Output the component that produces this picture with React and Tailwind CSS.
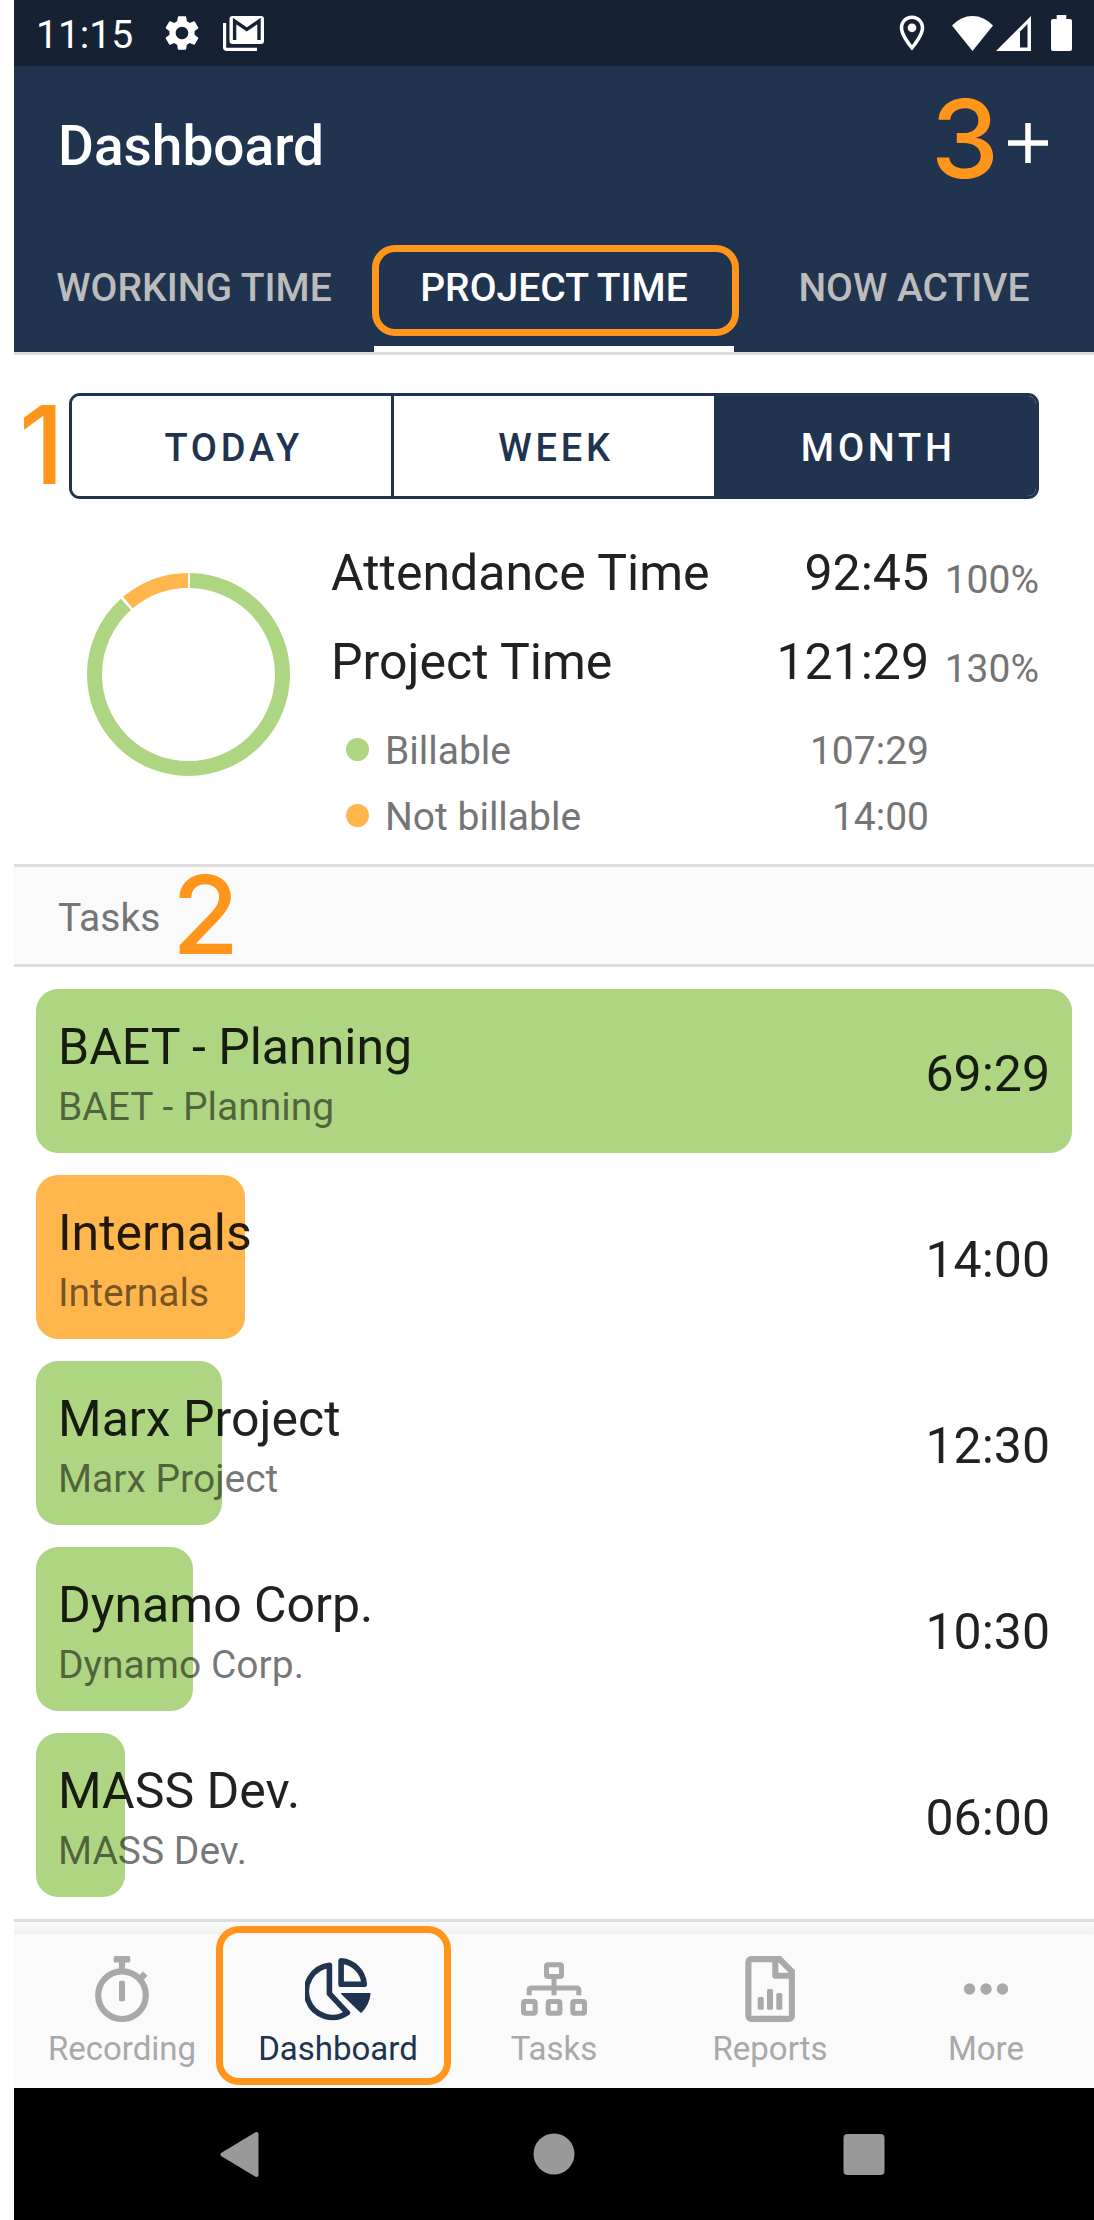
import { useState } from "react";
import { MdSettings, MdOutlineLocationOn } from "react-icons/md";

const TASKS = [
    { name: "BAET - Planning", time: "69:29", minutes: 4169, billable: true },
    { name: "Internals", time: "14:00", minutes: 840, billable: false },
    { name: "Marx Project", time: "12:30", minutes: 750, billable: true },
    { name: "Dynamo Corp.", time: "10:30", minutes: 630, billable: true },
    { name: "MASS Dev.", time: "06:00", minutes: 360, billable: true },
];

const NAV = [
    { label: "Recording", Icon: StopwatchIcon },
    { label: "Dashboard", Icon: PieIcon },
    { label: "Tasks", Icon: SitemapIcon },
    { label: "Reports", Icon: ReportIcon },
    { label: "More", Icon: MoreIcon },
];

function StopwatchIcon() {
    return (
        <svg width="66" height="66" viewBox="0 0 66 66" fill="none" stroke="currentColor" strokeWidth="6.2">
            <circle cx="33" cy="39.2" r="23.8" />
            <path d="M33 5v9M50.5 23.5l5.7-5.9" />
            <rect x="24.7" y="0" width="16.6" height="6.4" rx="1.5" fill="currentColor" stroke="none" />
            <rect x="30" y="24.7" width="6" height="20.6" rx="1.5" fill="currentColor" stroke="none" />
        </svg>
    );
}

function PieIcon() {
    return (
        <svg width="66" height="66" viewBox="0 0 66 66" fill="none" stroke="currentColor" strokeWidth="5.6" strokeLinejoin="round">
            <path d="M36.1 4.9V28.2H59.2A25 25 0 0 0 36.1 4.9Z" />
            <path d="M24.4 9.2V37.6L42.4 56.8A26.2 26.2 0 1 1 24.4 9.2Z" />
            <path d="M36.5 37.6H65A30 30 0 0 1 56 56.2Z" fill="currentColor" strokeWidth="1.2" />
        </svg>
    );
}

function SitemapIcon() {
    return (
        <svg width="66" height="66" viewBox="0 0 66 66" fill="none" stroke="currentColor" strokeWidth="5">
            <rect x="25.5" y="8.8" width="15" height="11.7" rx="1.5" />
            <path d="M33 21v18.3M8.2 39.3V34q0-2 2-2h45.6q2 0 2 2v5.3" />
            <rect x="2.5" y="45.5" width="11.7" height="11.7" rx="1.5" />
            <rect x="27.2" y="45.5" width="11.7" height="11.7" rx="1.5" />
            <rect x="51.8" y="45.5" width="11.7" height="11.7" rx="1.5" />
        </svg>
    );
}

function ReportIcon() {
    return (
        <svg width="66" height="66" viewBox="0 0 66 66" fill="none" stroke="currentColor" strokeWidth="6.1">
            <path d="M14.4 3.1H42.5L54.9 15.5V59.9a3 3 0 0 1-3 3H14.4a3 3 0 0 1-3-3V6.1a3 3 0 0 1 3-3Z" />
            <path d="M38.3 3V19.7H55" strokeLinejoin="round" />
            <g fill="currentColor" stroke="none">
                <rect x="20.7" y="41" width="6" height="12.7" rx="1.5" />
                <rect x="30" y="33" width="6" height="20.7" rx="1.5" />
                <rect x="39.3" y="37" width="6" height="16.7" rx="1.5" />
            </g>
        </svg>
    );
}

function MoreIcon() {
    return (
        <svg width="66" height="66" viewBox="0 0 66 66" fill="currentColor">
            <circle cx="16.5" cy="33" r="5.7" />
            <circle cx="33" cy="33" r="5.7" />
            <circle cx="49.5" cy="33" r="5.7" />
        </svg>
    );
}

function StatusBar() {
    return (
        <div className="flex h-[66px] items-center bg-[#162234] px-[22px] text-white">
            <span className="pt-[3px] text-[39px] leading-[46px]">11:15</span>
            <MdSettings className="ml-[28px] size-[42px]" />
            <svg className="ml-5" width="41" height="35" viewBox="0 0 41 35" fill="none">
                <path d="M1.6 7V31.4a2 2 0 0 0 2 2H34" stroke="white" strokeWidth="3.2" />
                <rect x="6.5" y="0" width="34.5" height="28" rx="3" fill="white" />
                <path d="M11.6 24V5L23.8 13.5L36 5V24" stroke="#162234" strokeWidth="3.4" />
            </svg>

            <MdOutlineLocationOn className="ml-auto size-[42px]" />
            <svg className="ml-[19px]" width="41" height="35" viewBox="0 0 41 35" fill="white">
                <path d="M0 9.5Q9 0 20.5 0T41 9.5L20.5 35Z" />
            </svg>
            <svg className="ml-[3px]" width="35" height="35" viewBox="0 0 35 35" fill="white">
                <path fillRule="evenodd" d="M0 35L35 0V35ZM24 15.5V31.5H31.5V8Z" />
            </svg>
            <svg className="ml-5" width="21" height="36" viewBox="0 0 21 36" fill="white">
                <rect x="0" y="4" width="21" height="32" rx="2" />
                <rect x="5.7" y="0" width="9.6" height="6" />
            </svg>
        </div>
    );
}

function Header({ tab, setTab }) {
    return (
        <header className="border-b-[3px] border-[#dddddd] bg-[#20334f]">
            <div className="relative flex h-[154px] items-center justify-between px-[44px]">
                <h1 className="pt-[6px] text-[55px] leading-[64px] font-medium text-white">Dashboard</h1>
                <button aria-label="Add" className="text-white">
                    <svg width="44" height="44" viewBox="0 0 44 44" stroke="currentColor" strokeWidth="5.5">
                        <path d="M22 2v40M2 22h40" />
                    </svg>
                </button>
                <span className="absolute top-[18px] right-[95px] font-['Inter',sans-serif] text-[109px] leading-none font-medium text-[#ff951a]">3</span>
            </div>

            <div className="grid h-[132px] grid-cols-3">
                {["WORKING TIME", "PROJECT TIME", "NOW ACTIVE"].map((name) => (
                    <button
                        key={name}
                        onClick={() => setTab(name)}
                        className={`relative pt-[3px] text-[39px] leading-[46px] font-medium ${tab === name ? "text-white" : "text-[#bcbcbc]"}`}
                    >
                        {name}
                        {tab === name && <span className="absolute inset-x-0 bottom-0 h-[6px] bg-white" />}
                        {name === "PROJECT TIME" && (
                            <span className="absolute top-[25px] -right-[5px] bottom-[16px] -left-[2px] rounded-[23px] border-[7px] border-[#ff951a]" />
                        )}
                    </button>
                ))}
            </div>
        </header>
    );
}

function RangeSwitch() {
    const [range, setRange] = useState("MONTH");
    return (
        <div className="relative">
            <span className="absolute -top-[3px] -left-[50px] font-['Inter',sans-serif] text-[109px] leading-none font-medium text-[#ff951a]">1</span>
            <div className="flex h-[106px] overflow-hidden rounded-[11px] border-[3px] border-[#20334f]">
                {["TODAY", "WEEK", "MONTH"].map((name) => (
                    <button
                        key={name}
                        onClick={() => setRange(name)}
                        className={`flex-1 border-r-[3px] border-[#20334f] pt-1 pl-1 text-[38px] leading-[46px] font-medium tracking-widest last:border-r-0 ${range === name ? "bg-[#20334f] text-white" : "bg-white text-[#20334f]"}`}
                    >
                        {name}
                    </button>
                ))}
            </div>
        </div>
    );
}

// Ring chart, billable share first, drawn clockwise from the top
function Donut() {
    const r = 94;
    const c = 2 * Math.PI * r;
    const billable = c * (6449 / 7289);
    return (
        <svg width="203" height="203" viewBox="0 0 203 203" fill="none" strokeWidth="15">
            <g transform="rotate(-90 101.5 101.5)">
                <circle cx="101.5" cy="101.5" r={r} stroke="#aed581" strokeDasharray={`${billable - 2.8} ${c}`} strokeDashoffset="-1.4" />
                <circle cx="101.5" cy="101.5" r={r} stroke="#ffb74d" strokeDasharray={`${c - billable - 2.8} ${c}`} strokeDashoffset={-billable - 1.4} />
            </g>
        </svg>
    );
}

function Summary() {
    const totals = [
        ["Attendance Time", "92:45", "100%"],
        ["Project Time", "121:29", "130%"],
    ];
    const split = [
        ["Billable", "107:29", "bg-[#aed581]"],
        ["Not billable", "14:00", "bg-[#ffb74d]"],
    ];
    return (
        <div className="flex pt-[29px] pb-[14px]">
            <div className="w-[262px] shrink-0 pt-[45px] pl-[18px]">
                <Donut />
            </div>
            <div className="flex-1">
                {totals.map(([label, value, percent]) => (
                    <div key={label} className="flex h-[89px] items-center text-[50px] leading-[60px] text-[#212121]">
                        <span className="flex-1">{label}</span>
                        <span>{value}</span>
                        <span className="w-[110px] pt-[14px] text-right text-[39px] leading-[46px] text-[#757575]">{percent}</span>
                    </div>
                ))}
                <div className="mt-[12px]">
                    {split.map(([label, value, dot]) => (
                        <div key={label} className="flex h-[66px] items-center pr-[110px] pl-[15px] text-[39px] leading-[46px] text-[#757575]">
                            <span className={`mb-1 size-[23px] rounded-full ${dot}`} />
                            <span className="flex-1 pl-4">{label}</span>
                            <span>{value}</span>
                        </div>
                    ))}
                </div>
            </div>
        </div>
    );
}

function TaskRow({ task, max }) {
    return (
        <li className="relative flex h-[164px] items-center justify-between px-[22px]">
            <div
                className={`absolute inset-y-0 left-0 rounded-[22px] ${task.billable ? "bg-[#aed581]" : "bg-[#ffb74d]"}`}
                style={{ width: `${(task.minutes / max) * 100}%` }}
            />
            <div className="relative pt-[12px] leading-[60px]">
                <div className="text-[50px] text-black/87">{task.name}</div>
                <div className="text-[39px] text-black/54">{task.name}</div>
            </div>
            <div className="relative pt-[6px] text-[50px] leading-[60px] text-black/87">{task.time}</div>
        </li>
    );
}

function BottomNav() {
    return (
        <nav className="border-t-[3px] border-[#dddddd] bg-[#fafafa]">
            <div className="h-[12px] bg-linear-to-b from-[#fafafa] to-[#f1f1f1]" />
            <div className="grid grid-cols-5">
                {NAV.map(({ label, Icon }) => (
                    <a
                        key={label}
                        href="#"
                        className={`relative flex flex-col items-center pt-[22px] pb-[19px] ${label === "Dashboard" ? "text-[#20334f]" : "text-[#a9a9a9]"}`}
                    >
                        <Icon />
                        <span className="mt-[7px] text-[33px] leading-[40px]">{label}</span>
                        {label === "Dashboard" && (
                            <span className="absolute -top-[8px] -right-[5px] bottom-[3px] -left-[14px] rounded-[23px] border-[7px] border-[#ff951a]" />
                        )}
                    </a>
                ))}
            </div>
        </nav>
    );
}

function SystemNav() {
    return (
        <div className="flex h-[132px] items-center justify-between bg-black px-[206px] text-[#999999]">
            <button aria-label="Back">
                <svg width="48" height="48" viewBox="0 0 48 48" fill="currentColor" stroke="currentColor" strokeWidth="4" strokeLinejoin="round">
                    <path d="M2.5 24.5L36.5 4V45Z" />
                </svg>
            </button>
            <button aria-label="Home">
                <svg width="48" height="48" viewBox="0 0 48 48" fill="currentColor">
                    <circle cx="24" cy="24" r="20.5" />
                </svg>
            </button>
            <button aria-label="Overview">
                <svg width="48" height="48" viewBox="0 0 48 48" fill="currentColor">
                    <rect x="3.5" y="4" width="41" height="41" rx="4" />
                </svg>
            </button>
        </div>
    );
}

export default function App() {
    const [tab, setTab] = useState("PROJECT TIME");
    const max = TASKS[0].minutes;

    return (
        <div className="min-h-screen bg-white pl-[14px] font-['Roboto',sans-serif]">
            <div className="flex min-h-screen flex-col">
                <StatusBar />
                <Header tab={tab} setTab={setTab} />

                <main className="flex-1">
                    <section className="px-[55px] pt-[38px]">
                        <RangeSwitch />
                        <Summary />
                    </section>

                    <div className="relative flex h-[103px] items-center border-y-[3px] border-[#dddddd] bg-[#fafafa] px-[44px]">
                        <h2 className="pt-1 text-[39px] leading-[46px] text-[#757575]">Tasks</h2>
                        <span className="absolute -top-[7px] left-[158px] font-['Inter',sans-serif] text-[109px] leading-none font-medium text-[#ff951a]">2</span>
                    </div>

                    <ul className="flex flex-col gap-[22px] p-[22px]">
                        {TASKS.map((task) => (
                            <TaskRow key={task.name} task={task} max={max} />
                        ))}
                    </ul>
                </main>

                <BottomNav />
                <SystemNav />
            </div>
        </div>
    );
}
